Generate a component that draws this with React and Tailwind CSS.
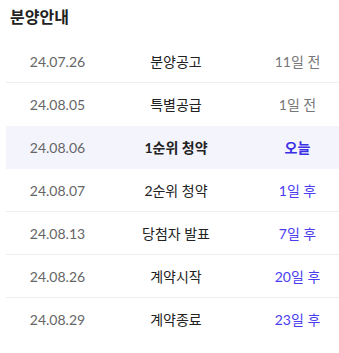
import React from "react";

const rows = [
  { date: "24.07.26", title: "분양공고", dday: "11일 전", state: "past" },
  { date: "24.08.05", title: "특별공급", dday: "1일 전", state: "past" },
  { date: "24.08.06", title: "1순위 청약", dday: "오늘", state: "today" },
  { date: "24.08.07", title: "2순위 청약", dday: "1일 후", state: "future" },
  { date: "24.08.13", title: "당첨자 발표", dday: "7일 후", state: "future" },
  { date: "24.08.26", title: "계약시작", dday: "20일 후", state: "future" },
  { date: "24.08.29", title: "계약종료", dday: "23일 후", state: "future" },
];

function Row({ item, last }) {
  const today = item.state === "today";
  return (
    <div
      className={`grid h-[43px] grid-cols-[103px_134px_1fr] items-center ${
        today ? "bg-[#f4f4fc]" : ""
      } ${last || today ? "" : "border-b border-[#eeeeee]"}`}
    >
      <div className="text-center text-[14px] text-[#666666] [font-family:Lato,'Noto_Sans_CJK_KR',sans-serif]">
        {item.date}
      </div>
      <div
        className={`text-center text-[14px] text-[#222222] ${
          today ? "font-bold" : ""
        }`}
      >
        {item.title}
      </div>
      <div
        className={`pl-[13px] text-center text-[14px] ${
          item.state === "past"
            ? "text-[#777777]"
            : today
            ? "font-bold text-[#3b2fe6]"
            : "text-[#4a3df0]"
        }`}
      >
        {item.dday}
      </div>
    </div>
  );
}

export default function App() {
  return (
    <div className="w-[339px] h-[353px] overflow-hidden bg-white [font-family:Lato,'Noto_Sans_CJK_KR',sans-serif]">
      <h2 className="h-[40px] pl-[10px] pt-[6px] text-[16px] font-bold leading-[22px] text-[#222222]">
        분양안내
      </h2>
      <div className="pl-[6px]">
        {rows.map((r, i) => (
          <Row key={r.date} item={r} last={i === rows.length - 1 || rows[i + 1]?.state === "today"} />
        ))}
      </div>
    </div>
  );
}
